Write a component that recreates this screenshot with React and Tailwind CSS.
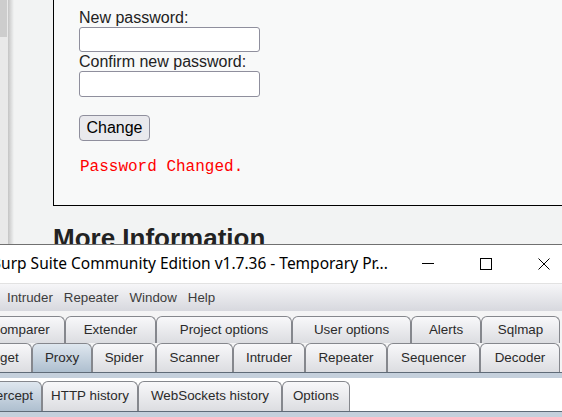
const row1 = [
  { label: 'Comparer', cls: 'w-[90px] ml-[-25px]' },
  { label: 'Extender', cls: 'w-[91px]' },
  { label: 'Project options', cls: 'w-[136px]' },
  { label: 'User options', cls: 'w-[119px]' },
  { label: 'Alerts', cls: 'w-[70px]' },
  { label: 'Sqlmap', cls: 'w-[79px]' },
];

const row2 = [
  { label: 'Target', cls: 'w-[64px] ml-[-32px]' },
  { label: 'Proxy', cls: 'w-[60px]', sel: true },
  { label: 'Spider', cls: 'w-[64px]' },
  { label: 'Scanner', cls: 'w-[77px]' },
  { label: 'Intruder', cls: 'w-[72px]' },
  { label: 'Repeater', cls: 'w-[82px]' },
  { label: 'Sequencer', cls: 'w-[93px]' },
  { label: 'Decoder', cls: 'w-[80px]' },
];

const row3 = [
  { label: 'Intercept', cls: 'w-[70px] ml-[-28px]', sel: true },
  { label: 'HTTP history', cls: 'w-[96px]' },
  { label: 'WebSockets history', cls: 'w-[144px]' },
  { label: 'Options', cls: 'w-[68px]' },
];

function Tab({ label, cls, sel, h }) {
  const base =
    'flex items-center justify-center shrink-0 border border-b-0 border-[#85878d] rounded-t-[6px] text-[13.4px] text-[#2a2a2a] whitespace-nowrap';
  const bg = sel
    ? 'bg-linear-to-b from-[#dfe7ef] to-[#aebfcf]'
    : 'bg-linear-to-b from-[#f8f8fa] to-[#dcdde1]';
  return <div className={`${base} ${bg} ${cls} ${h}`}>{label}</div>;
}

export default function App() {
  return (
    <div className="w-[562px] h-[417px] overflow-hidden bg-[#f2f3f3] font-['Liberation_Sans',Arial,sans-serif]">
      {/* Browser page */}
      <div className="h-[244px] flex overflow-hidden">
        <div className="w-[8px] shrink-0 bg-[#e9e9e9] flex flex-col">
          <div className="h-[37px] w-[7px] bg-[#cdcdcd]" />
        </div>
        <div className="w-[6px] shrink-0 bg-linear-to-r from-[#c4c4c4] to-[#f2f3f3]" />
        <div className="flex-1 pl-[39px] flex flex-col">
          <div className="h-[206px] shrink-0 border-l border-b border-black bg-[#f8f9f9] pl-[25px] pt-[9px] flex flex-col text-[16px] leading-[18px] text-[#222]">
            <div>New password:</div>
            <div className="w-[181px] h-[25px] bg-white border border-[#8f8f9d] rounded-[3px]" />
            <div className="mt-[1px]">Confirm new password:</div>
            <div className="w-[181px] h-[26px] bg-white border border-[#8f8f9d] rounded-[3px]" />
            <div className="mt-[18px] w-[71px] h-[26px] bg-[#e9e9ed] border border-[#8f8f9d] rounded-[4px] flex items-center justify-center text-black">
              Change
            </div>
            <div className="mt-[17px] pl-[1px] font-['Liberation_Mono','Courier_New',monospace] text-[16px] text-[#ff0000]">
              Password Changed.
            </div>
          </div>
          <div className="mt-[17px] text-[26px] leading-[30px] font-bold text-[#222]">More Information</div>
        </div>
      </div>

      {/* Burp window */}
      <div className="border-t border-[#707070] bg-[#e4e5e8]">
        <div className="h-[39px] bg-white flex items-center border-b border-[#e2e2e2]">
          <div className="ml-[-9px] flex-1 text-[15.5px] font-['Noto_Sans',sans-serif] text-black whitespace-nowrap overflow-hidden">
            Burp Suite Community Edition v1.7.36 - Temporary Pr...
          </div>
          <div className="flex items-center mr-[-11px]">
            <div className="w-[58px] h-[38px] flex items-center justify-center">
              <svg width="12" height="12" viewBox="0 0 12 12"><path d="M0 5.5H12" stroke="#000" strokeWidth="1" /></svg>
            </div>
            <div className="w-[58px] h-[38px] flex items-center justify-center">
              <svg width="12" height="12" viewBox="0 0 12 12"><rect x="0.5" y="0.5" width="11" height="11" fill="none" stroke="#000" strokeWidth="1" /></svg>
            </div>
            <div className="w-[58px] h-[38px] flex items-center justify-center">
              <svg width="12" height="12" viewBox="0 0 12 12"><path d="M0.5 0.5L11.5 11.5M11.5 0.5L0.5 11.5" stroke="#000" strokeWidth="1" /></svg>
            </div>
          </div>
        </div>
        {/* menu bar */}
        <div className="h-[27px] bg-linear-to-b from-[#f6f6f8] to-[#d7d8de] flex items-center pl-[7px] gap-[11px] text-[13.3px] text-[#3c3c3c]">
          <span>Intruder</span>
          <span>Repeater</span>
          <span>Window</span>
          <span>Help</span>
        </div>
        {/* tab area */}
        <div className="bg-[#f4f4f5] pt-[5px]">
          <div className="flex h-[27px]">
            {row1.map((t) => (
              <Tab key={t.label} {...t} h="h-[27px]" />
            ))}
          </div>
          <div className="flex h-[29px]">
            {row2.map((t) => (
              <Tab key={t.label} {...t} h="h-[29px]" />
            ))}
          </div>
        </div>
        <div className="h-[1px] bg-[#5f6b78]" />
        <div className="h-[5px] bg-[#c5d0dc]" />
        <div className="bg-white pt-[3px]">
          <div className="flex h-[30px]">
            {row3.map((t) => (
              <Tab key={t.label} {...t} h="h-[30px]" />
            ))}
          </div>
        </div>
        <div className="h-[1px] bg-[#5f6b78]" />
        <div className="h-[6px] bg-[#c5d0dc]" />
      </div>
    </div>
  );
}
